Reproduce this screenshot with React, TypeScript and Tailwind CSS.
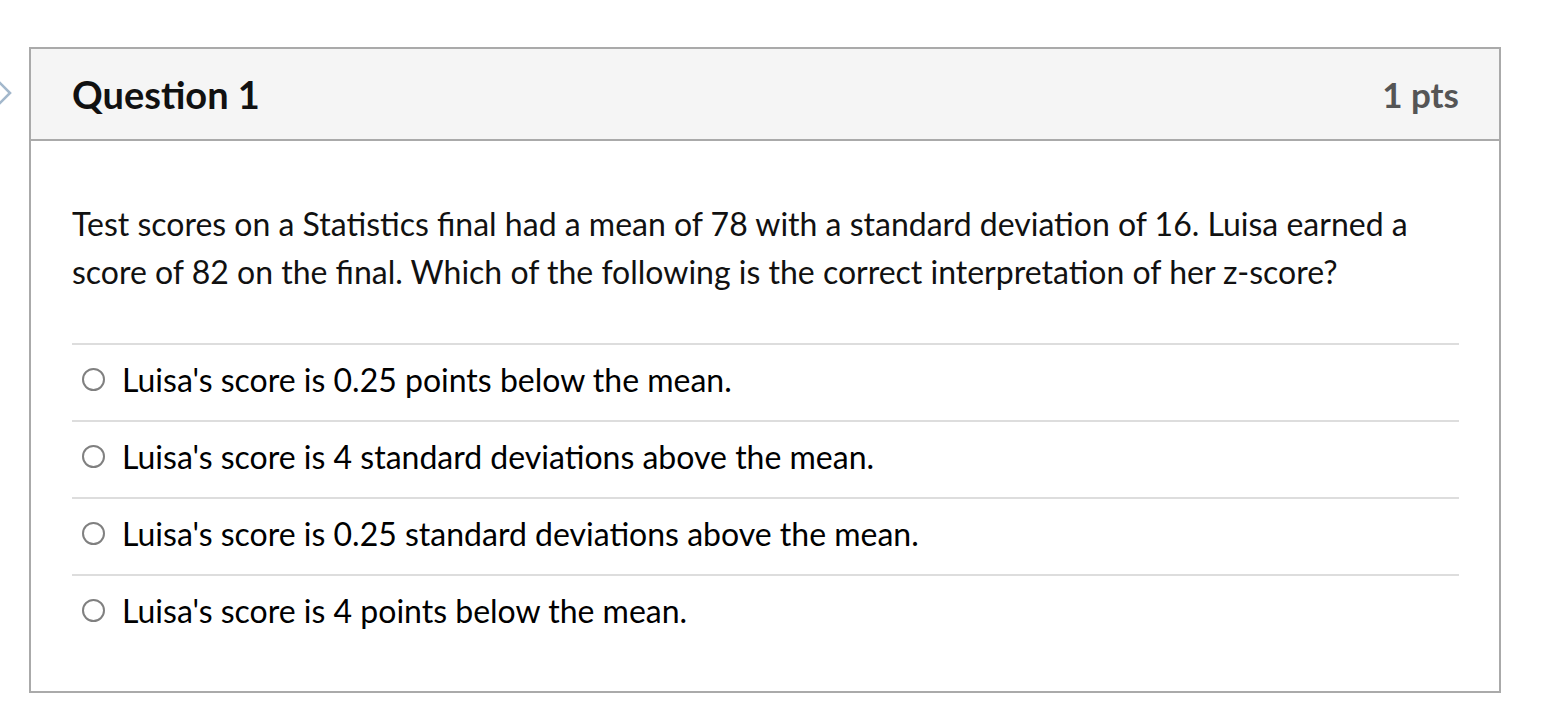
import * as React from "react";

const answers = [
  "Luisa's score is 0.25 points below the mean.",
  "Luisa's score is 4 standard deviations above the mean.",
  "Luisa's score is 0.25 standard deviations above the mean.",
  "Luisa's score is 4 points below the mean.",
];

function Chevron() {
  return (
    <div className="w-[29px] shrink-0 pt-[34px]">
      <svg width="29" height="26" viewBox="0 0 29 26" className="overflow-visible">
        <polyline points="-2,0 10,12 -2,24" fill="none" stroke="#a3b8cc" strokeWidth="2.6" />
      </svg>
    </div>
  );
}

function AnswerRow({ label }: { label: string }) {
  return (
    <label className="flex h-[77px] items-center border-t-2 border-[#dddddd] pb-[6px]">
      <span className="ml-[10px] h-[23px] w-[23px] shrink-0 rounded-full border-2 border-[#808080] bg-white" />
      <span className="ml-[17px] text-[32px] text-black">{label}</span>
    </label>
  );
}

export default function App() {
  return (
    <div className="min-h-screen bg-white pt-[47px] font-['Lato',sans-serif]">
      <div className="flex">
        <Chevron />
        <div className="w-[1472px] border-2 border-[#aaaaaa]">
          <header className="flex h-[92px] items-center justify-between border-b-2 border-[#aaaaaa] bg-[#f5f5f5] pl-[41px] pr-[40px]">
            <h1 className="text-[38px] font-bold text-[#111111]">Question 1</h1>
            <span className="text-[35px] font-bold text-[#555555]">1 pts</span>
          </header>

          <div className="pl-[41px] pr-[40px] pt-[59px] pb-[40px]">
            <p className="text-[32px] leading-[48px] text-[#111111]">
              Test scores on a Statistics final had a mean of 78 with a standard deviation of 16. Luisa earned a score of 82 on the final. Which of the following is the correct interpretation of her z-score?
            </p>

            <div className="mt-[47px]">
              {answers.map((a) => (
                <AnswerRow key={a} label={a} />
              ))}
            </div>
          </div>
        </div>
      </div>
    </div>
  );
}
